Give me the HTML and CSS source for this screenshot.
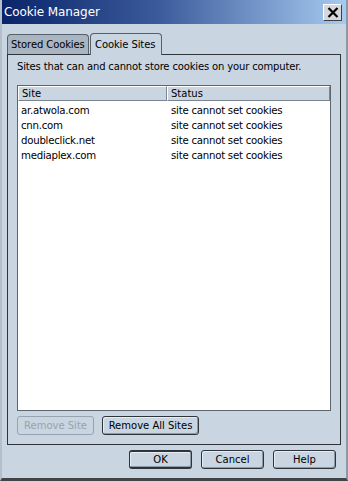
FILE: index.html
```html
<!DOCTYPE html>
<html>
<head>
<meta charset="utf-8">
<link rel="stylesheet" href="styles.css">
</head>
<body>
<div class="window">
  <div class="titlebar">
    <span class="title">Cookie Manager</span>
    <span class="close">
      <svg width="12" height="11" viewBox="0 0 12 11"><path d="M1.5 1 L10.5 10 M10.5 1 L1.5 10" stroke="#000" stroke-width="2.2"/></svg>
    </span>
  </div>
  <div class="body">
    <div class="tabs">
      <div class="tab">Stored Cookies</div>
      <div class="tab active">Cookie Sites</div>
    </div>
    <div class="panel">
      <div class="desc">Sites that can and cannot store cookies on your computer.</div>
      <div class="list">
        <div class="head">
          <div class="col c1">Site</div>
          <div class="col c2">Status</div>
        </div>
        <div class="rows">
          <div class="row"><span class="c1">ar.atwola.com</span><span class="c2">site cannot set cookies</span></div>
          <div class="row"><span class="c1">cnn.com</span><span class="c2">site cannot set cookies</span></div>
          <div class="row"><span class="c1">doubleclick.net</span><span class="c2">site cannot set cookies</span></div>
          <div class="row"><span class="c1">mediaplex.com</span><span class="c2">site cannot set cookies</span></div>
        </div>
      </div>
      <div class="actions">
        <button class="btn disabled">Remove Site</button>
        <button class="btn wide">Remove All Sites</button>
      </div>
    </div>
    <div class="footer">
      <button class="btn fbtn default">OK</button>
      <button class="btn fbtn">Cancel</button>
      <button class="btn fbtn">Help</button>
    </div>
  </div>
</div>
</body>
</html>
```
FILE: styles.css
```css
* { box-sizing: border-box; }
html, body { margin: 0; padding: 0; background: #ffffff; }
body { font-family: "DejaVu Sans", sans-serif; font-size: 10px; color: #000; }
.window {
  width: 348px; height: 481px;
  background: #c9d5e0;
  border-left: 2px solid #b3bfca;
  border-right: 2px solid #8c98a4;
  border-bottom: 3px solid #404448;
  display: flex; flex-direction: column;
}
.titlebar {
  height: 24px;
  background: linear-gradient(to right, #0a246a 0%, #3a5a9a 45%, #a6caf0 100%);
  display: flex; align-items: center; justify-content: space-between;
  padding: 0 4px 0 2px;
}
.title { color: #fff; font-size: 12px; letter-spacing: -0.1px; }
.close {
  width: 19px; height: 17px;
  background: #d4d8dc;
  border: 1px solid; border-color: #fff #404040 #404040 #fff;
  display: flex; align-items: center; justify-content: center;
}
.body { flex: 1; padding: 8px 5px 0 5px; display: flex; flex-direction: column; }
.tabs { display: flex; height: 22px; align-items: flex-end; }
.tab {
  height: 20px; width: 82px; padding: 0 3px;
  border: 1px solid #55606a; border-bottom: none;
  border-radius: 4px 4px 0 0;
  background: #a9b5c1;
  display: flex; align-items: center;
  letter-spacing: -0.1px;
  white-space: nowrap;
}
.tab.active { height: 22px; width: 72px; background: #c9d5e0; margin-left: 1px; position: relative; top: 1px; padding: 0 4px; }
.panel {
  height: 391px;
  border: 1px solid #2e343a;
  padding: 6px 9px 0 9px;
  display: flex; flex-direction: column;
}
.desc { letter-spacing: -0.15px; height: 17px; white-space: nowrap; }
.list {
  margin-top: 7px;
  height: 326px;
  border: 1px solid #5c666f;
  background: #fff;
  display: flex; flex-direction: column;
}
.head { display: flex; height: 15px; background: #c9d5e0; }
.col { border: 1px solid #fff; border-right-color: #7a8590; border-bottom-color: #7a8590; padding-left: 3px; line-height: 13px; font-size: 10px; }
.head .c1 { width: 149px; }
.head .c2 { flex: 1; }
.rows { padding-top: 2px; }
.row { display: flex; height: 15px; line-height: 15px; font-size: 10.2px; letter-spacing: -0.25px; }
.row .c1 { width: 150px; padding-left: 3px; }
.row .c2 { padding-left: 3px; }
.actions { display: flex; gap: 8px; margin-top: 5px; }
.btn {
  font-family: inherit; font-size: 10px; color: #000;
  height: 19px; padding: 0 4px;
  background: #c9d5e0;
  border: 1px solid #2e343a; border-radius: 3px;
  box-shadow: inset -1px -1px 0 #8d99a5, inset 1px 1px 0 #e6eef5;
  white-space: nowrap;
}
.btn.disabled { color: #97a3ae; border-color: #97a3ae; box-shadow: none; width: 77px; }
.btn.wide { width: 97px; }
.footer { display: flex; justify-content: flex-end; gap: 9px; padding: 5px 5px 0 0; }
.fbtn { width: 63px; }
.fbtn.default { border-width: 2px 1px 2px 1px; }
```
